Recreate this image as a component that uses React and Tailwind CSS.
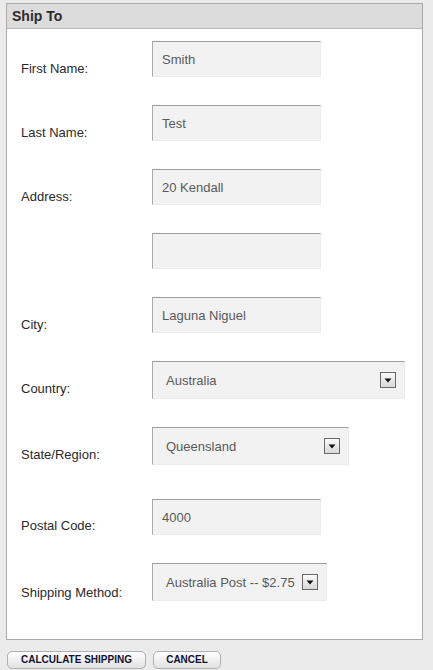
import React from "react";

const font = { fontFamily: '"Liberation Sans", Arial, sans-serif' };

function Arrow() {
  return (
    <div className="w-[16px] h-[16px] border border-[#6b6b6b] bg-gradient-to-b from-[#fafafa] to-[#d8d8d8] flex items-center justify-center shrink-0">
      <svg width="8" height="5" viewBox="0 0 8 5">
        <path d="M0.5 0.5 L7.5 0.5 L4 4.5 Z" fill="#111" />
      </svg>
    </div>
  );
}

function TextBox({ value }) {
  return (
    <div className="w-[169px] h-[36px] bg-[#f2f2f2] border-t border-l border-t-[#9c9c9c] border-l-[#ababab] border-r border-b border-r-[#ececec] border-b-[#ececec] flex items-center pl-[9px] pt-[2px] text-[13px] text-[#5a5a5a]">
      {value}
    </div>
  );
}

function SelectBox({ value, w }) {
  return (
    <div className={`${w} h-[38px] bg-[#f2f2f2] border-t border-l border-t-[#9c9c9c] border-l-[#ababab] border-r border-b border-r-[#ececec] border-b-[#ececec] flex items-center pl-[13px] pr-[8px] text-[13px] text-[#5a5a5a]`}>
      <span className="flex-1 whitespace-nowrap pt-[2px]">{value}</span>
      <Arrow />
    </div>
  );
}

function Row({ label, mt, pt = "pt-[20px]", children }) {
  return (
    <div className={`flex items-start ${mt}`}>
      <div className={`w-[131px] shrink-0 text-[13px] leading-[16px] text-[#2a2a2a] ${pt}`}>{label}</div>
      {children}
    </div>
  );
}

export default function App() {
  return (
    <div className="w-[433px] h-[670px] bg-[#ebebeb] pt-[3px]" style={font}>
      <div className="ml-[6px] w-[417px] border border-[#a9a9a9] bg-white">
        <div className="h-[25px] bg-[#dcdcdc] border-b border-[#b5b5b5] flex items-center pl-[5px] pt-[1px] text-[14px] font-bold text-[#2b2b2b]">
          Ship To
        </div>
        <div className="pl-[14px] pt-[12px] pb-[38px]">
          <Row label="First Name:" mt="mt-0">
            <TextBox value="Smith" />
          </Row>
          <Row label="Last Name:" mt="mt-[28px]">
            <TextBox value="Test" />
          </Row>
          <Row label="Address:" mt="mt-[28px]">
            <TextBox value="20 Kendall" />
          </Row>
          <Row label="" mt="mt-[28px]">
            <TextBox value="" />
          </Row>
          <Row label="City:" mt="mt-[28px]">
            <TextBox value="Laguna Niguel" />
          </Row>
          <Row label="Country:" mt="mt-[28px]">
            <SelectBox value="Australia" w="w-[253px]" />
          </Row>
          <Row label="State/Region:" mt="mt-[28px]">
            <SelectBox value="Queensland" w="w-[197px]" />
          </Row>
          <Row label="Postal Code:" mt="mt-[34px]" pt="pt-[19px]">
            <TextBox value="4000" />
          </Row>
          <Row label="Shipping Method:" mt="mt-[28px]" pt="pt-[22px]">
            <SelectBox value="Australia Post -- $2.75" w="w-[175px]" />
          </Row>
        </div>
      </div>
      <div className="flex gap-[7px] pl-[7px] mt-[11px]">
        <button className="h-[18px] w-[139px] rounded-[5px] border border-[#b0b0b0] bg-gradient-to-b from-white to-[#e2e2e2] text-[10px] font-bold text-[#111133] flex items-center justify-center leading-none">
          CALCULATE SHIPPING
        </button>
        <button className="h-[18px] w-[68px] rounded-[5px] border border-[#b0b0b0] bg-gradient-to-b from-white to-[#e2e2e2] text-[10px] font-bold text-[#111133] flex items-center justify-center leading-none">
          CANCEL
        </button>
      </div>
    </div>
  );
}
